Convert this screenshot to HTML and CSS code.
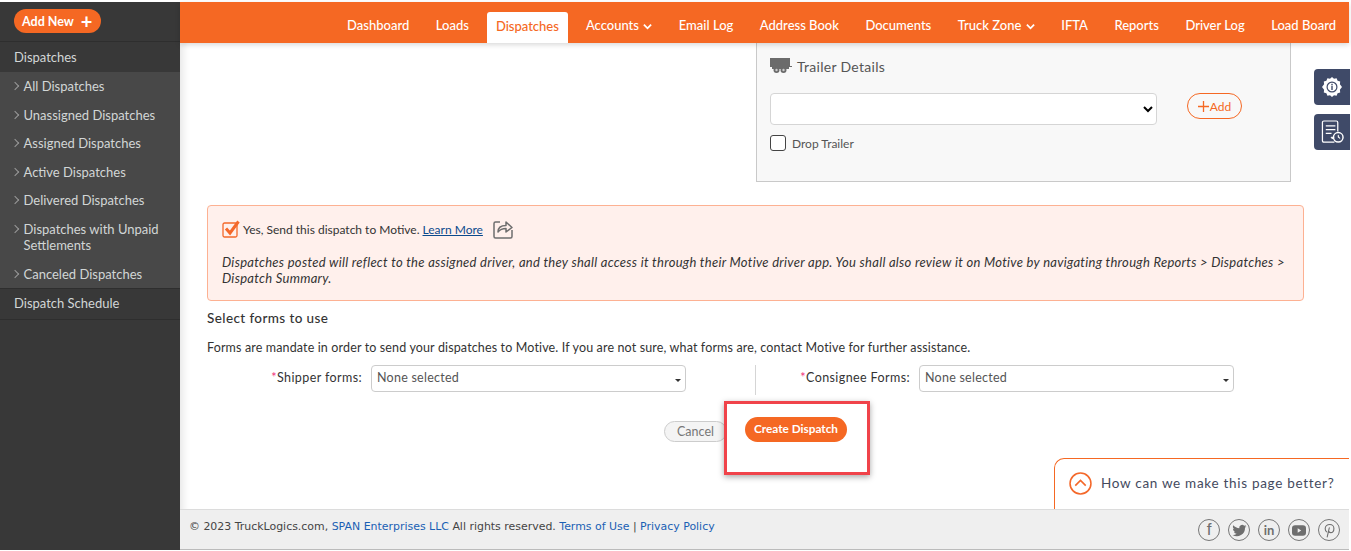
FILE: index.html
```html
<!DOCTYPE html>
<html lang="en">
<head>
<meta charset="utf-8">
<title>Create Dispatch</title>
<link rel="stylesheet" href="styles.css">
</head>
<body>
<div class="page">
  <aside class="sidebar">
    <div class="add-row"><a class="add-btn">Add New <span class="add-plus">+</span></a></div>
    <div class="side-head">Dispatches</div>
    <ul class="side-sub">
      <li>All Dispatches</li>
      <li>Unassigned Dispatches</li>
      <li>Assigned Dispatches</li>
      <li>Active Dispatches</li>
      <li>Delivered Dispatches</li>
      <li>Dispatches with Unpaid Settlements</li>
      <li>Canceled Dispatches</li>
    </ul>
    <div class="side-head side-foot">Dispatch Schedule</div>
  </aside>
  <div class="main">
    <header class="topbar">
      <nav class="nav">
        <a>Dashboard</a>
        <a>Loads</a>
        <a class="active">Dispatches</a>
        <a>Accounts <svg class="chev" viewBox="0 0 10 7"><path d="M1 1.5l4 4 4-4" fill="none" stroke="#fff" stroke-width="2"/></svg></a>
        <a>Email Log</a>
        <a>Address Book</a>
        <a>Documents</a>
        <a>Truck Zone <svg class="chev" viewBox="0 0 10 7"><path d="M1 1.5l4 4 4-4" fill="none" stroke="#fff" stroke-width="2"/></svg></a>
        <a>IFTA</a>
        <a>Reports</a>
        <a>Driver Log</a>
        <a>Load Board</a>
      </nav>
    </header>
    <main class="content">
      <div class="trailer-wrap">
        <section class="trailer">
          <h3 class="trailer-title">
            <svg class="truck" viewBox="0 0 22 16"><rect x="0" y="0" width="20" height="9" fill="#6b6b6b"/><rect x="20" y="8" width="2" height="1" fill="#6b6b6b"/><rect x="2" y="9" width="17" height="2" fill="#6b6b6b"/><circle cx="6.500" cy="12" r="3" fill="#6b6b6b"/><circle cx="13.500" cy="12" r="3" fill="#6b6b6b"/><circle cx="6.500" cy="12" r="1.200" fill="#ccc"/><circle cx="13.500" cy="12" r="1.200" fill="#ccc"/></svg>
            Trailer Details
          </h3>
          <div class="trailer-row">
            <select class="trailer-select"><option></option></select>
            <a class="add-outline"><svg class="add-outline-plus" viewBox="0 0 11 11"><path d="M5.500 0v11M0 5.500h11" stroke="#f56823" stroke-width="1.300"/></svg>Add</a>
          </div>
          <label class="drop"><span class="box"></span>Drop Trailer</label>
        </section>
      </div>
      <section class="notice">
        <div class="notice-top">
          <svg class="check" viewBox="0 0 18 18"><rect x="1" y="3" width="14" height="14" rx="1.500" fill="none" stroke="#f4682a" stroke-width="1.300"/><path d="M4 8.500l4 4.500L16.500 1.500" fill="none" stroke="#f4682a" stroke-width="3"/></svg>
          <span>Yes, Send this dispatch to Motive.</span>
          <a class="learn">Learn More</a>
          <svg class="share" viewBox="0 0 22 22"><path d="M8 4H3.500Q2 4 2 5.500V18.500Q2 20 3.500 20H18.500Q20 20 20 18.500V12" fill="none" stroke="#6e6e6e" stroke-width="1.500"/><path d="M6 14C6 9 9 7.500 14 7.500V4l6 5.500-6 4.500v-3.500C10 10.500 8 11.500 6 14z" fill="none" stroke="#6e6e6e" stroke-width="1.500" stroke-linejoin="round"/></svg>
        </div>
        <p class="notice-text">Dispatches posted will reflect to the assigned driver, and they shall access it through their Motive driver app. You shall also review it on Motive by navigating through Reports &gt; Dispatches &gt; Dispatch Summary.</p>
      </section>
      <h4 class="forms-title">Select forms to use</h4>
      <p class="forms-text">Forms are mandate in order to send your dispatches to Motive. If you are not sure, what forms are, contact Motive for further assistance.</p>
      <div class="forms-row">
        <div class="form-col left">
          <label class="form-label"><span class="req">*</span>Shipper forms:</label>
          <button class="multi shipper"><span class="multi-text">None selected</span><span class="caret"></span></button>
        </div>
        <div class="form-col right">
          <label class="form-label"><span class="req">*</span>Consignee Forms:</label>
          <button class="multi consignee"><span class="multi-text">None selected</span><span class="caret"></span></button>
        </div>
      </div>
      <div class="actions">
        <button class="cancel">Cancel</button>
        <button class="create"><span class="create-text">Create Dispatch</span></button>
      </div>
    </main>
    <footer class="footer">
      <p class="copy">© 2023 TruckLogics.com, <a>SPAN Enterprises LLC</a> All rights reserved. <a>Terms of Use</a> | <a>Privacy Policy</a></p>
      <div class="social">
        <span class="soc soc-f">f</span>
        <span class="soc"><svg viewBox="0 0 24 24" width="15" height="15"><path fill="#6e6e6e" d="M23 5c-.8.400-1.700.600-2.600.700.900-.600 1.600-1.400 2-2.500-.900.500-1.900.900-2.900 1.100a4.600 4.600 0 0 0-7.800 4.200C7.900 8.300 4.500 6.500 2.200 3.700a4.600 4.600 0 0 0 1.400 6.100c-.700 0-1.400-.200-2.100-.600 0 2.300 1.600 4.200 3.700 4.600-.700.200-1.400.200-2.100.100.600 1.800 2.300 3.200 4.300 3.200A9.300 9.300 0 0 1 .8 19a13 13 0 0 0 20-11.600c.900-.600 1.700-1.400 2.200-2.400z"/></svg></span>
        <span class="soc soc-in">in</span>
        <span class="soc"><svg viewBox="0 0 16 12" width="14" height="11"><rect width="16" height="12" rx="3.500" fill="#6e6e6e"/><path d="M6.500 3.500v5l4-2.500z" fill="#efefef"/></svg></span>
        <span class="soc"><svg viewBox="0 0 12 16" width="11" height="15"><path d="M3 9.500C1.800 8.800 1.300 7.500 1.300 6.200 1.300 3.500 3.500 1.500 6.300 1.500c2.700 0 4.500 1.800 4.500 4.200 0 2.700-1.500 4.600-3.600 4.600-1 0-1.800-.700-1.800-1.500M5.800 5 3.500 15" fill="none" stroke="#6e6e6e" stroke-width="1.200" stroke-linecap="round"/></svg></span>
      </div>
    </footer>
  </div>
</div>

<div class="side-tabs">
  <a class="side-tab"><svg viewBox="0 0 20 20" width="20" height="20"><path fill="#fff" d="M10 0l2 1.800 2.600-.600 1 2.500 2.600.900-.300 2.700L20 10l-2.100 2.700.300 2.700-2.600.900-1 2.500-2.600-.600L10 20l-2-1.800-2.600.600-1-2.500-2.600-.900.300-2.700L0 10l2.100-2.700-.300-2.700 2.600-.900 1-2.500 2.600.600z"/><circle cx="10" cy="10" r="5.500" fill="#3f4a68"/><circle cx="10" cy="10" r="4.300" fill="#fff"/><rect x="9.300" y="8.700" width="1.400" height="4.300" fill="#3f4a68"/><rect x="9.300" y="6.800" width="1.400" height="1.300" fill="#3f4a68"/></svg></a>
  <a class="side-tab"><svg viewBox="0 0 24 26" width="23" height="25"><path d="M14 23H3q-1.500 0-1.500-1.500V2.500Q1.500 1 3 1h13q1.500 0 1.500 1.500V12" fill="none" stroke="#fff" stroke-width="1.300"/><path d="M5 6h10M5 10h10M5 14h6" stroke="#fff" stroke-width="1.300"/><circle cx="18" cy="18" r="5" fill="#3f4a68" stroke="#fff" stroke-width="1.500"/><path d="M18 15.500V18l2 1.200M10.500 18h3l-1.500 1.800z" stroke="#fff" stroke-width="1" fill="#fff"/></svg></a>
</div>

<div class="highlight"></div>

<div class="feedback">
  <svg class="fb-icon" viewBox="0 0 22 22" width="23" height="23"><circle cx="11" cy="11" r="10" fill="none" stroke="#f4682a" stroke-width="1.500"/><path d="M6 13l5-5 5 5" fill="none" stroke="#f4682a" stroke-width="1.500"/></svg>
  <span>How can we make this page better?</span>
</div>
</body>
</html>
```

FILE: styles.css
```css
* { box-sizing: border-box; }
html, body { margin: 0; height: 100%; }
body {
  width: 1351px;
  height: 551px;
  overflow: hidden;
  background: #fff;
  font-family: "Lato", "Liberation Sans", sans-serif;
  font-size: 13px;
  color: #333;
  position: relative;
}
p, h3, h4, ul { margin: 0; padding: 0; }
.page {
  display: grid;
  grid-template-columns: 180px 1169px;
  padding-top: 2px;
  height: 550px;
}

/* Sidebar */
.sidebar { background: #383838; color: #d2d6d6; height: 548px; }
.add-row { height: 40px; padding: 7px 0 0 14px; border-bottom: 1px solid #2e2e2e; }
.add-btn {
  display: inline-flex;
  align-items: center;
  height: 24px;
  width: 87px;
  padding-left: 8px;
  border-radius: 12px;
  background: #f56823;
  color: #fff;
  font-size: 12.500px;
  font-weight: 700;
}
.add-plus { font-size: 20px; margin-left: 7px; line-height: 20px; }
.side-head { height: 30px; padding-left: 14px; line-height: 30px; font-size: 13px; }
.side-foot { height: 32px; line-height: 28px; border-top: 1px solid #2e2e2e; border-bottom: 1px solid #2e2e2e; }
.side-sub { list-style: none; background: #484848; padding: 0; height: 216px; }
.side-sub li {
  position: relative;
  padding: 6px 8px 6.600px 23.500px;
  line-height: 16px;
  font-size: 13px;
}
.side-sub li::before {
  content: "";
  position: absolute;
  left: 12px;
  top: 11px;
  width: 5px;
  height: 5px;
  border-top: 1px solid #9a9a9a;
  border-right: 1px solid #9a9a9a;
  transform: rotate(45deg);
}

/* Main */
.main {
  display: flex;
  flex-direction: column;
  height: 548px;
  position: relative;
  box-shadow: inset 10px 0 10px -8px rgba(0,0,0,.12);
}
.topbar {
  height: 41px;
  background: #f56823;
  box-shadow: 0 2px 5px rgba(0,0,0,.15);
  position: relative;
  z-index: 1;
  flex: none;
}
.nav {
  display: flex;
  justify-content: flex-end;
  align-items: flex-end;
  height: 41px;
  padding-right: 13px;
  gap: 26.500px;
}
.nav a {
  color: #fff;
  font-size: 13px;
  font-weight: 500;
  height: 31px;
  line-height: 27px;
  white-space: nowrap;
}
.nav a.active {
  background: #fff;
  color: #f56823;
  padding: 0 9px;
  margin: 0 -8.500px;
  border-radius: 3px 3px 0 0;
  line-height: 29px;
}
.chev { width: 9px; height: 7px; margin-left: 1px; }

.content { flex: 1; padding: 0 45px 0 27px; }
.trailer-wrap { display: flex; justify-content: flex-end; }
.trailer {
  width: 535px;
  margin-right: 13px;
  height: 139px;
  background: #f8f8f8;
  border: 1px solid #c9c9c9;
  border-top: 0;
  padding: 14px 13px 0;
}
.trailer-title {
  display: flex;
  align-items: center;
  gap: 5px;
  font-weight: 400;
  font-size: 14px;
  color: #555;
  letter-spacing: .3px;
  height: 18px;
}
.truck { width: 22px; height: 16px; }
.trailer-row { display: flex; align-items: flex-start; margin-top: 18px; }
.trailer-select {
  width: 387px;
  height: 32px;
  background: #fff;
  border: 1px solid #d5d5d5;
  border-radius: 4px;
  font-size: 13px;
}
.add-outline {
  display: flex;
  align-items: center;
  justify-content: center;
  gap: 1px;
  margin-left: 30px;
  width: 55px;
  height: 26px;
  border: 1px solid #f56823;
  border-radius: 13px;
  color: #f56823;
  font-size: 12px;
}
.add-outline-plus { width: 11px; height: 11px; }
.drop { display: flex; align-items: center; gap: 6px; margin-top: 10px; font-size: 12px; color: #555; }
.box { width: 16px; height: 16px; border: 1.500px solid #444; border-radius: 3px; background: #fff; }

.notice {
  height: 96px;
  margin-top: 23px;
  background: #fff0ec;
  border: 1px solid #fdb192;
  border-radius: 4px;
  padding: 12px 14px 0;
  color: #333;
}
.notice-top { display: flex; align-items: center; font-size: 12px; height: 22px; }
.check { width: 18px; height: 18px; margin-right: 3px; }
.learn { margin-left: 3px; color: #0b4a8c; text-decoration: underline; font-size: 12px; }
.share { width: 22px; height: 22px; margin-left: 9px; }
.notice-text { margin-top: 14px; font-style: italic; font-size: 13px; letter-spacing: .29px; line-height: 16px; }

.forms-title { margin-top: 9px; font-size: 13.500px; font-weight: 500; line-height: 17px; letter-spacing: .4px; }
.forms-text { margin-top: 13px; font-size: 12.500px; line-height: 16px; letter-spacing: .14px; }
.forms-row { display: flex; margin-top: 9px; }
.form-col { display: flex; align-items: center; justify-content: flex-end; height: 30px; }
.form-col.left { width: 549px; padding: 0 69px 3px 0; border-right: 1px solid #d5d5d5; }
.form-col.right { width: 478px; padding-bottom: 3px; }
.form-label { margin-right: 9px; font-size: 12.500px; letter-spacing: .4px; position: relative; top: -1px; }
.req { color: #f0307a; }
.multi {
  position: relative;
  height: 27px;
  padding: 0 0 0 5px;
  text-align: left;
  background: #fff;
  border: 1px solid #ccc;
  border-radius: 4px;
  font: 12.500px "Lato", "Liberation Sans", sans-serif;
  letter-spacing: .25px;
  color: #555;
}
.multi-text { display: block; margin-top: -2px; }
.multi.shipper { width: 315px; }
.multi.consignee { width: 315px; }
.caret {
  position: absolute;
  right: 4px;
  top: 13px;
  border-left: 3px solid transparent;
  border-right: 3px solid transparent;
  border-top: 3px solid #333;
}
.actions { display: flex; justify-content: flex-start; align-items: flex-start; padding: 22px 0 0 457px; gap: 16px; }
.cancel {
  margin-top: 4px;
  width: 63px;
  height: 21px;
  border: 1px solid #ccc;
  border-radius: 11px;
  background: #f4f4f4;
  color: #777;
  font: 12.500px "Lato", "Liberation Sans", sans-serif;
}
.create {
  width: 102px;
  height: 25px;
  margin-left: 2px;
  padding: 0 0 2px;
  border: 0;
  border-radius: 13px;
  background: #f56823;
  color: #fff;
  font: 700 11.800px "Lato", "Liberation Sans", sans-serif;
}
.create-text { display: block; }

.footer {
  flex: none;
  height: 41px;
  background: #efefef;
  border-top: 1px solid #dcdcdc;
  border-bottom: 1px solid #bbb;
  display: flex;
  align-items: center;
  justify-content: space-between;
  padding: 0 9px 0 9px;
  position: relative;
  z-index: 2;
}
.copy { font: 10.950px "DejaVu Sans", sans-serif; color: #444; padding-bottom: 7px; }
.copy a { color: #1a5fb4; }
.social { display: flex; gap: 8px; margin-top: 1px; }
.soc {
  display: flex;
  align-items: center;
  justify-content: center;
  width: 22px;
  height: 22px;
  border: 1px solid #777;
  border-radius: 50%;
  color: #6e6e6e;
  font: 700 13px "Liberation Sans", sans-serif;
}
.soc-f { font: 400 17px "Liberation Sans", sans-serif; }
.soc-in { font: 700 13px "Lato", sans-serif; }

/* Overlays */
.side-tabs { position: absolute; left: 1314px; top: 69px; display: flex; flex-direction: column; gap: 9px; z-index: 3; }
.side-tab {
  display: flex;
  align-items: center;
  justify-content: center;
  width: 36px;
  height: 36px;
  background: #3f4a68;
  border-radius: 4px 0 0 4px;
}
.highlight {
  position: absolute;
  left: 724px;
  top: 401px;
  width: 146px;
  height: 74px;
  border: 3px solid #f0434a;
  box-shadow: 0 2px 6px rgba(0,0,0,.35);
  z-index: 3;
}
.feedback {
  position: absolute;
  left: 1054px;
  top: 458px;
  width: 295px;
  height: 51px;
  display: flex;
  align-items: center;
  gap: 9px;
  padding: 0 0 2px 14px;
  background: #fff;
  border-top: 1px solid #f56823;
  border-left: 1px solid #f56823;
  border-radius: 10px 0 0 0;
  font-size: 13.500px;
  letter-spacing: .7px;
  color: #444a5e;
  z-index: 3;
}
```
